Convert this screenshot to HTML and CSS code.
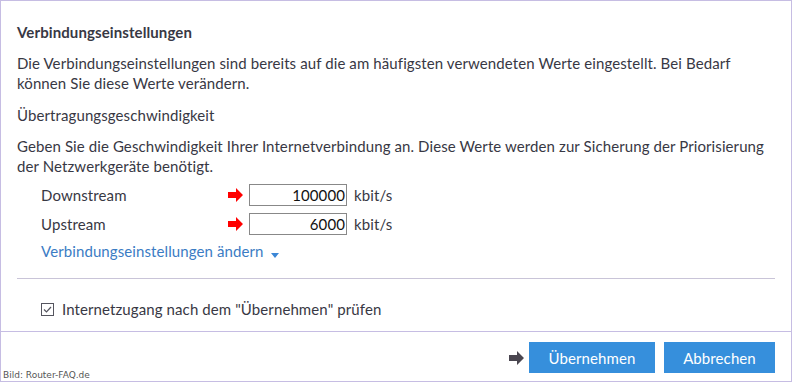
FILE: index.html
```html
<!DOCTYPE html>
<html lang="de">
<head>
<meta charset="utf-8">
<link rel="stylesheet" href="styles.css">
</head>
<body>
<div class="dialog">
  <div class="content">
    <h2 class="title">Verbindungseinstellungen</h2>
    <p class="text">Die Verbindungseinstellungen sind bereits auf die am häufigsten verwendeten Werte eingestellt. Bei Bedarf können Sie diese Werte verändern.</p>
    <p class="text sub">Übertragungsgeschwindigkeit</p>
    <p class="text">Geben Sie die Geschwindigkeit Ihrer Internetverbindung an. Diese Werte werden zur Sicherung der Priorisierung der Netzwerkgeräte benötigt.</p>
    <div class="rows">
      <div class="row">
        <span class="label">Downstream</span>
        <svg class="arrow" width="15" height="14" viewBox="0 0 15 14"><path d="M0 4h8V0l7 7-7 7v-4H0z" fill="#f00"/></svg>
        <span class="input">100000</span>
        <span class="unit">kbit/s</span>
      </div>
      <div class="row">
        <span class="label">Upstream</span>
        <svg class="arrow" width="15" height="14" viewBox="0 0 15 14"><path d="M0 4h8V0l7 7-7 7v-4H0z" fill="#f00"/></svg>
        <span class="input">6000</span>
        <span class="unit">kbit/s</span>
      </div>
      <div class="link">Verbindungseinstellungen ändern <svg class="caret" width="8" height="5" viewBox="0 0 8 5"><path d="M0 0h8L4 5z" fill="#3b86d6"/></svg></div>
    </div>
    <div class="sep"></div>
    <div class="check">
      <svg class="box" width="13" height="13" viewBox="0 0 13 13"><rect x="0.5" y="0.5" width="12" height="12" fill="#fff" stroke="#55555f"/><path d="M3 6.5l2.5 2.5 4.5-5" fill="none" stroke="#55555f" stroke-width="1.2"/></svg>
      <span>Internetzugang nach dem "Übernehmen" prüfen</span>
    </div>
  </div>
  <div class="footer">
    <svg class="arrow dark" width="15" height="14" viewBox="0 0 15 14"><path d="M0 4h8V0l7 7-7 7v-4H0z" fill="#4a4650"/></svg>
    <button class="btn first">Übernehmen</button>
    <button class="btn">Abbrechen</button>
  </div>
  <div class="credit">Bild: Router-FAQ.de</div>
</div>
</body>
</html>
```
FILE: styles.css
```css
* { box-sizing: border-box; }
html, body { margin: 0; padding: 0; background: #fff; }
body { font-family: "Lato", "Liberation Sans", sans-serif; color: #383844; font-size: 15px; letter-spacing: 0.1px; }
.dialog {
  position: relative;
  width: 792px;
  height: 382px;
  border: 1px solid #c6bde3;
  display: flex;
  flex-direction: column;
}
.content {
  flex: 1;
  padding: 21px 24px 0 16px;
}
.title { font-size: 15px; font-weight: 700; margin: 0; line-height: 20px; }
.text { margin: 11px 0 0; line-height: 20px; }
.sub { margin-top: 12px; }
.rows { padding-left: 24px; margin-top: 8px; }
.row { display: flex; align-items: center; height: 22px; margin-bottom: 7px; }
.label { width: 187px; }
.arrow { margin-right: 6px; }
.input {
  width: 98px; height: 22px; border: 1px solid #888; text-align: right;
  color: #111; line-height: 20px; padding-right: 1px;
}
.unit { margin-left: 7px; }
.link { color: #3b7cc4; line-height: 20px; margin-top: -1px; }
.caret { margin-left: 3px; vertical-align: -1px; }
.sep { height: 1px; background: #c9c4d8; margin: 17px -8px 0 0; }
.check { display: flex; align-items: center; padding-left: 24px; margin-top: 21px; }
.box { margin-right: 8px; }
.footer {
  height: 50px;
  border-top: 1px solid #c6bde3;
  display: flex; justify-content: flex-end; align-items: flex-start;
  padding: 10px 16px 0 0;
}
.footer .arrow { margin: 9px 5px 0 0; }
.btn {
  font-family: inherit; font-size: 15px; color: #fff; background: #368fdc;
  border: 0; height: 31px; padding: 0; width: 126px; letter-spacing: 0.1px;
}
.btn.first { margin-right: 9px; }
.btn + .btn { width: 111px; }
.credit {
  position: absolute; left: 2px; bottom: 1px; letter-spacing: 0;
  font-family: "DejaVu Sans", sans-serif; font-size: 9px; color: #555;
}
```
